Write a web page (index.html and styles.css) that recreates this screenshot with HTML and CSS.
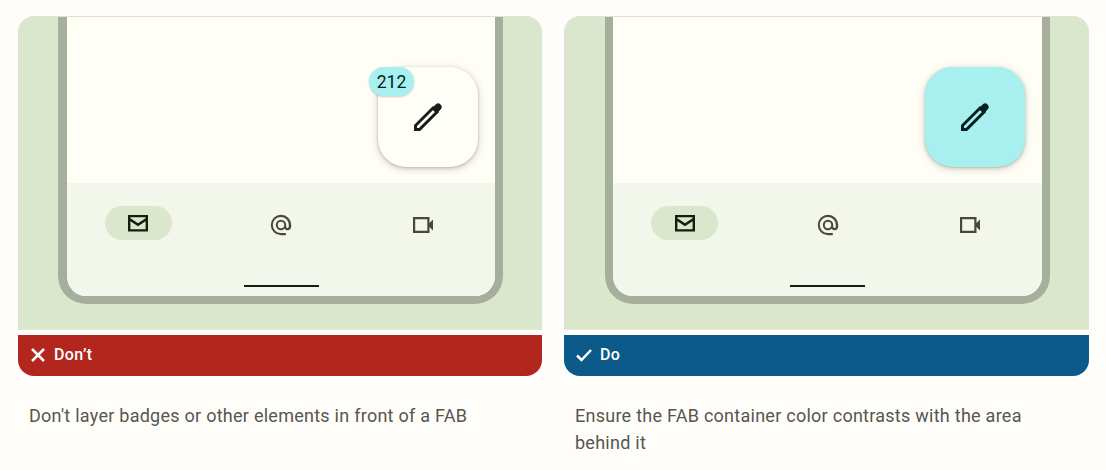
FILE: index.html
```html
<!DOCTYPE html>
<html lang="en">
<head>
<meta charset="utf-8">
<title>FAB guidance</title>
<link rel="stylesheet" href="styles.css">
</head>
<body>
<main class="cards">
  <article class="card card-dont">
    <div class="figure">
      <div class="phone">
        <div class="screen">
          <div class="fab fab-plain">
            <svg class="pen" viewBox="0 0 30 30"><path class="pen-body" d="M20 6 24 10 6.500 27.500 2.500 27.500 2.500 23.500Z"/><path class="pen-cap" d="M18.500 6.500 23 2.200C24.300 1 26 1 27.500 2.400 29 3.800 29.200 5.700 28 7L24 11.500Z"/></svg>
          </div>
          <span class="badge">212</span>
        </div>
        <nav class="nav">
          <div class="nav-items">
            <span class="nav-item"><span class="pill"><svg class="icon icon-active" viewBox="0 0 24 24"><path d="M2 4h20v16.500H2V4Zm2.400 2.300v1l7.600 5 7.600-5v-1H4.400Zm15.200 3.900-7.600 5-7.600-5v8h15.200v-8Z"/></svg></span></span>
            <span class="nav-item nav-at"><svg class="icon" viewBox="0 0 24 24"><path d="M12 22.200a10.200 10.200 0 1 1 10.200-10.200v1.400c0 2.100-1.600 3.800-3.700 3.800-1.200 0-2.300-.6-2.900-1.500-.9.9-2.200 1.500-3.600 1.500a5.200 5.200 0 1 1 5.200-5.200v1.400c0 .9.600 1.500 1.300 1.500s1.300-.6 1.300-1.500V12a8 8 0 1 0-8 8h5v2.200h-5Zm0-7a3.200 3.200 0 1 0 0-6.400 3.200 3.200 0 0 0 0 6.400Z"/></svg></span>
            <span class="nav-item nav-video"><svg class="icon" viewBox="0 0 24 24"><path d="M2 4h16.500v6l3.500-3.500v11l-3.500-3.500v6H2V4Zm2.200 2.200v11.600h12.100V6.200H4.200Z"/></svg></span>
          </div>
          <div class="home-bar"></div>
        </nav>
      </div>
    </div>
    <div class="verdict verdict-dont">
      <svg class="verdict-icon" viewBox="0 0 16 16"><path d="M2 2 14 14M14 2 2 14"/></svg>
      <span>Don’t</span>
    </div>
    <p class="copy">Don't layer badges or other elements in front of a FAB</p>
  </article>
  <article class="card">
    <div class="figure">
      <div class="phone">
        <div class="screen">
          <div class="fab fab-tinted">
            <svg class="pen" viewBox="0 0 30 30"><path class="pen-body" d="M20 6 24 10 6.500 27.500 2.500 27.500 2.500 23.500Z"/><path class="pen-cap" d="M18.500 6.500 23 2.200C24.300 1 26 1 27.500 2.400 29 3.800 29.200 5.700 28 7L24 11.500Z"/></svg>
          </div>
        </div>
        <nav class="nav">
          <div class="nav-items">
            <span class="nav-item"><span class="pill"><svg class="icon icon-active" viewBox="0 0 24 24"><path d="M2 4h20v16.500H2V4Zm2.400 2.300v1l7.600 5 7.600-5v-1H4.400Zm15.200 3.900-7.600 5-7.600-5v8h15.200v-8Z"/></svg></span></span>
            <span class="nav-item nav-at"><svg class="icon" viewBox="0 0 24 24"><path d="M12 22.200a10.200 10.200 0 1 1 10.200-10.200v1.400c0 2.100-1.600 3.800-3.700 3.800-1.200 0-2.300-.6-2.900-1.500-.9.9-2.200 1.500-3.600 1.500a5.200 5.200 0 1 1 5.200-5.200v1.400c0 .9.600 1.500 1.300 1.500s1.300-.6 1.300-1.500V12a8 8 0 1 0-8 8h5v2.200h-5Zm0-7a3.200 3.200 0 1 0 0-6.400 3.200 3.200 0 0 0 0 6.400Z"/></svg></span>
            <span class="nav-item nav-video"><svg class="icon" viewBox="0 0 24 24"><path d="M2 4h16.500v6l3.500-3.500v11l-3.500-3.500v6H2V4Zm2.200 2.200v11.600h12.100V6.200H4.200Z"/></svg></span>
          </div>
          <div class="home-bar"></div>
        </nav>
      </div>
    </div>
    <div class="verdict verdict-do">
      <svg class="verdict-icon" viewBox="0 0 16 16"><path d="M1 8.500 5.500 13 15 3"/></svg>
      <span>Do</span>
    </div>
    <p class="copy">Ensure the FAB container color contrasts with the area behind it</p>
  </article>
</main>
</body>
</html>
```
FILE: styles.css
```css
* { box-sizing: border-box; }
html, body { margin: 0; }
body {
  background: #fffdf9;
  font-family: Roboto, "Liberation Sans", sans-serif;
  color: #55574e;
  overflow: hidden;
}
.cards {
  display: grid;
  grid-template-columns: 524fr 525fr;
  column-gap: 22px;
  padding: 16px 17px 0 18px;
}
.card { min-width: 0; }
.figure {
  height: 314px;
  background: #dbe7cc;
  border: 1px solid #dfe0d6;
  border-right: none;
  border-bottom: 1px solid #e6e9dc;
  border-radius: 16px 16px 0 0;
  padding-right: 39px;
  display: flex;
  justify-content: flex-end;
  overflow: hidden;
}
.phone {
  width: 445px;
  height: 287px;
  border: 8px solid #a6af9c;
  border-top: none;
  border-radius: 0 0 28px 28px;
  display: flex;
  flex-direction: column;
  overflow: hidden;
  background: #fefef6;
}
.card-dont .phone { border-left-width: 9px; }
.screen {
  position: relative;
  height: 166px;
  flex: none;
}
.fab {
  position: absolute;
  top: 50px;
  right: 17px;
  width: 100px;
  height: 100px;
  border-radius: 28px;
  display: flex;
  align-items: center;
  justify-content: center;
  box-shadow: 0 1px 3px rgba(60, 60, 50, .3), 0 2px 6px 2px rgba(60, 60, 50, .12);
}
.fab-plain { background: #fefdf8; }
.fab-tinted { background: #a8f0f0; }
.pen { width: 30px; height: 30px; }
.pen-body { fill: none; stroke: #1a1c18; stroke-width: 3; stroke-linejoin: miter; }
.pen-cap { fill: #1a1c18; }
.fab-tinted .pen-body { stroke: #06201f; }
.fab-tinted .pen-cap { fill: #06201f; }
.badge {
  position: absolute;
  top: 50px;
  right: 81px;
  width: 45px;
  height: 29px;
  border-radius: 15px;
  background: #a8f0f0;
  color: #002021;
  font: 17.500px/30px Roboto, sans-serif;
  text-align: center;
  box-shadow: 0 1px 2px rgba(60, 60, 50, .25);
}
.nav {
  flex: 1;
  background: #f3f6eb;
  padding-top: 23px;
}
.nav-items {
  display: grid;
  grid-template-columns: repeat(3, 1fr);
  height: 34px;
}
.nav-item {
  display: flex;
  align-items: center;
  justify-content: center;
}
.nav-at { padding-top: 4px; }
.nav-video { padding: 4px 2px 0 0; }
.pill {
  width: 67px;
  height: 34px;
  border-radius: 17px;
  background: #dbe7cc;
  display: flex;
  align-items: center;
  justify-content: center;
}
.icon { width: 24px; height: 24px; fill: #46483f; }
.icon-active { fill: #131f0e; }
.home-bar {
  width: 75px;
  height: 2px;
  margin: 45px auto 0;
  background: #1a1c18;
}
.verdict {
  height: 41px;
  margin-top: 5px;
  border-radius: 0 0 16px 16px;
  display: flex;
  align-items: center;
  gap: 8px;
  padding: 0 0 1px 12px;
  color: #fff;
  font: 500 16px/20px Roboto, sans-serif;
  letter-spacing: .4px;
}
.verdict-dont { background: #b3261e; }
.verdict-do { background: #0b5a8a; }
.verdict-icon {
  width: 16px;
  height: 16px;
  fill: none;
  stroke: #fff;
  stroke-width: 2.5;
}
.copy {
  margin: 26px 0 0;
  padding: 0 11px;
  font-size: 18px;
  line-height: 27px;
  letter-spacing: .26px;
}
```
